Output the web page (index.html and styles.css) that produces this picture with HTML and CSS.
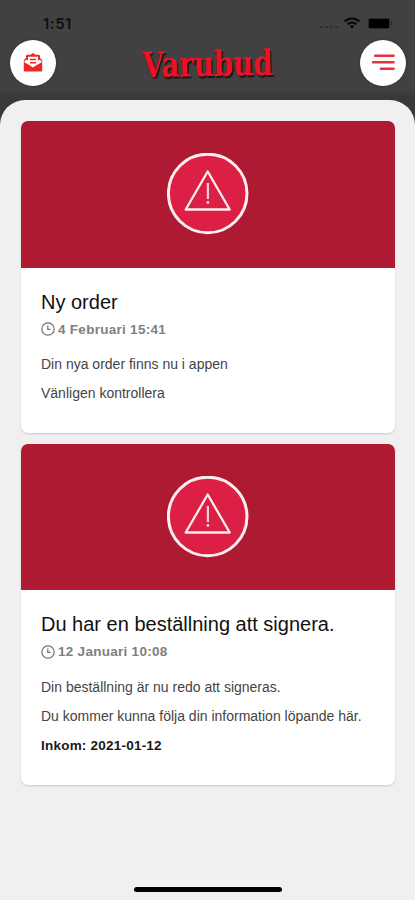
FILE: index.html
```html
<!DOCTYPE html>
<html lang="sv">
<head>
<meta charset="utf-8">
<title>Varubud</title>
<link rel="stylesheet" href="styles.css">
</head>
<body>
<div class="screen">
  <div class="status">
    <span class="time">1:51</span>
    <div class="indicators">
      <span class="signal"><i></i><i></i><i></i><i></i></span>
      <svg class="wifi" width="16" height="12" viewBox="0 0 16 12"><g fill="none" stroke="#080808" stroke-width="2.2"><path d="M.8 4.4a10.4 10.4 0 0 1 14.4 0"/><path d="M3.6 7.4a6.4 6.4 0 0 1 8.800 0"/></g><path d="M5.7 9.3a3.5 3.5 0 0 1 4.6 0L8 11.7z" fill="#080808"/></svg>
      <svg class="battery" width="25" height="11" viewBox="0 0 25 11"><rect x=".5" y=".5" width="21" height="10" rx="2" fill="#000" stroke="#2b2b2b"/><path d="M23 3.5c1.8.5 1.8 3.5 0 4z" fill="#202020"/></svg>
    </div>
  </div>
  <header class="bar">
    <button class="round" aria-label="Meddelanden">
      <svg width="20" height="20" viewBox="0 0 20 20"><path d="M.8 7 3 5V3.200Q3 1.800 4.600 1.800h2.800L10 0l2.600 1.800h2.800q1.600 0 1.600 1.400V5l2.200 2v10.500q0 1-1 1H1.800q-1 0-1-1z" fill="#ee2626"/><path d="M5 3.800h10v3.800l1.600-.8 1.800 1v1.800L13.800 12 10 14.400 6.200 12 1.600 9.600V7.800l1.800-1 1.600.8z" fill="#fff"/><path d="M7 6.500h6M7 9.700h6" stroke="#ee2626" stroke-width="1.600"/></svg>
    </button>
    <div class="logo"><span>Varubud</span></div>
    <button class="round" aria-label="Meny">
      <svg width="26" height="18" viewBox="0 0 26 18"><path d="M5.200 1.700h18.400M3 8.300h20.600M10.900 14.700h12.700" stroke="#e5333b" stroke-width="2.500" stroke-linecap="round"/></svg>
    </button>
  </header>
  <main class="panel">
    <article class="card">
      <div class="banner"><svg width="82" height="82" viewBox="0 0 82 82"><circle cx="40.700" cy="40.500" r="39.300" fill="#dc2045" stroke="#fbeef0" stroke-width="3"/><path d="M40.700 18.500 62.700 56.500H18.700z" fill="none" stroke="#fbeef0" stroke-width="2.300" stroke-linejoin="round"/><path d="M40.900 30v16" stroke="#f8ccd5" stroke-width="2.200"/><circle cx="40.900" cy="49.500" r="1.400" fill="#f8ccd5"/></svg></div>
      <div class="body">
        <h2>Ny order</h2>
        <div class="date"><svg width="14" height="14" viewBox="0 0 14 14"><circle cx="7" cy="7" r="6.200"/><path d="M6.800 3.500V7.300H9.500"/></svg><span>4 Februari 15:41</span></div>
        <p>Din nya order finns nu i appen</p>
        <p>Vänligen kontrollera</p>
      </div>
    </article>
    <article class="card">
      <div class="banner"><svg width="82" height="82" viewBox="0 0 82 82"><circle cx="40.700" cy="40.500" r="39.300" fill="#dc2045" stroke="#fbeef0" stroke-width="3"/><path d="M40.700 18.500 62.700 56.500H18.700z" fill="none" stroke="#fbeef0" stroke-width="2.300" stroke-linejoin="round"/><path d="M40.900 30v16" stroke="#f8ccd5" stroke-width="2.200"/><circle cx="40.900" cy="49.500" r="1.400" fill="#f8ccd5"/></svg></div>
      <div class="body">
        <h2>Du har en beställning att signera.</h2>
        <div class="date"><svg width="14" height="14" viewBox="0 0 14 14"><circle cx="7" cy="7" r="6.200"/><path d="M6.800 3.500V7.300H9.500"/></svg><span>12 Januari 10:08</span></div>
        <p>Din beställning är nu redo att signeras.</p>
        <p>Du kommer kunna följa din information löpande här.</p>
        <p class="strong">Inkom: 2021-01-12</p>
      </div>
    </article>
    <div class="home"></div>
  </main>
</div>
</body>
</html>
```
FILE: styles.css
```css
* { box-sizing: border-box; }
body { margin: 0; font-family: "Liberation Sans", Arial, sans-serif; }
.screen { width: 415px; height: 900px; background: #414141; display: flex; flex-direction: column; overflow: hidden; }
.status { height: 40px; padding: 7px 22px 0 43px; display: flex; justify-content: space-between; flex: none; }
.time { font: 600 15px/33px Inter, sans-serif; color: #101010; letter-spacing: .5px; }
.indicators { display: flex; align-items: center; height: 32px; }
.signal { display: flex; gap: 2px; margin: 7px 6px 0 0; }
.signal i { width: 3px; height: 2px; background: #303030; }
.wifi { margin-right: 8px; }
.bar { height: 60px; flex: none; display: flex; justify-content: space-between; align-items: flex-start; padding: 0 9px 0 10px; background: linear-gradient(#414141 50px, #353535); }
.round { width: 46px; height: 46px; padding: 0; border: 0; border-radius: 50%; background: #fff; display: flex; align-items: center; justify-content: center; box-shadow: 0 0 2px #222; }
.round svg { display: block; }
.logo { width: 134px; height: 46px; display: flex; align-items: center; justify-content: center; }
.logo span { font: bold 35px/46px "DejaVu Serif", serif; color: #ed1026; text-shadow: 2px 2px 1px #151515; transform: translate(-1px, 1px) rotate(-1deg) scaleX(.79); }
.panel { flex: 1; background: #f0f0f0; border-radius: 25px 25px 0 0; padding: 21px 20px 0 21px; display: flex; flex-direction: column; box-shadow: 0 0 0 30px #393939; clip-path: inset(-2px 0 0 0); }
.card { background: #fff; border-radius: 7px; overflow: hidden; margin-bottom: 10.5px; box-shadow: 0 1px 2px #ccc; flex: none; }
.banner { height: 146.5px; background: #ae1a32; display: flex; align-items: center; justify-content: center; }
.body { padding: 21px 20px 25px; }
h2 { margin: 0; font-size: 20px; font-weight: 400; line-height: 27px; color: #111; white-space: nowrap; }
.date { height: 28px; display: flex; align-items: center; gap: 3px; margin: -.5px 0 7px; font-size: 13.5px; font-weight: 700; color: #808080; letter-spacing: .28px; white-space: nowrap; }
.date svg { fill: none; stroke: #707070; stroke-width: 1.2; }
p { margin: 0; font-size: 14px; line-height: 29px; color: #444; white-space: nowrap; }
.strong { font-size: 13.5px; letter-spacing: .22px; font-weight: 700; color: #181818; }
.home { width: 148px; height: 5px; border-radius: 3px; background: #000; margin: auto auto 8px 113px; }
```
